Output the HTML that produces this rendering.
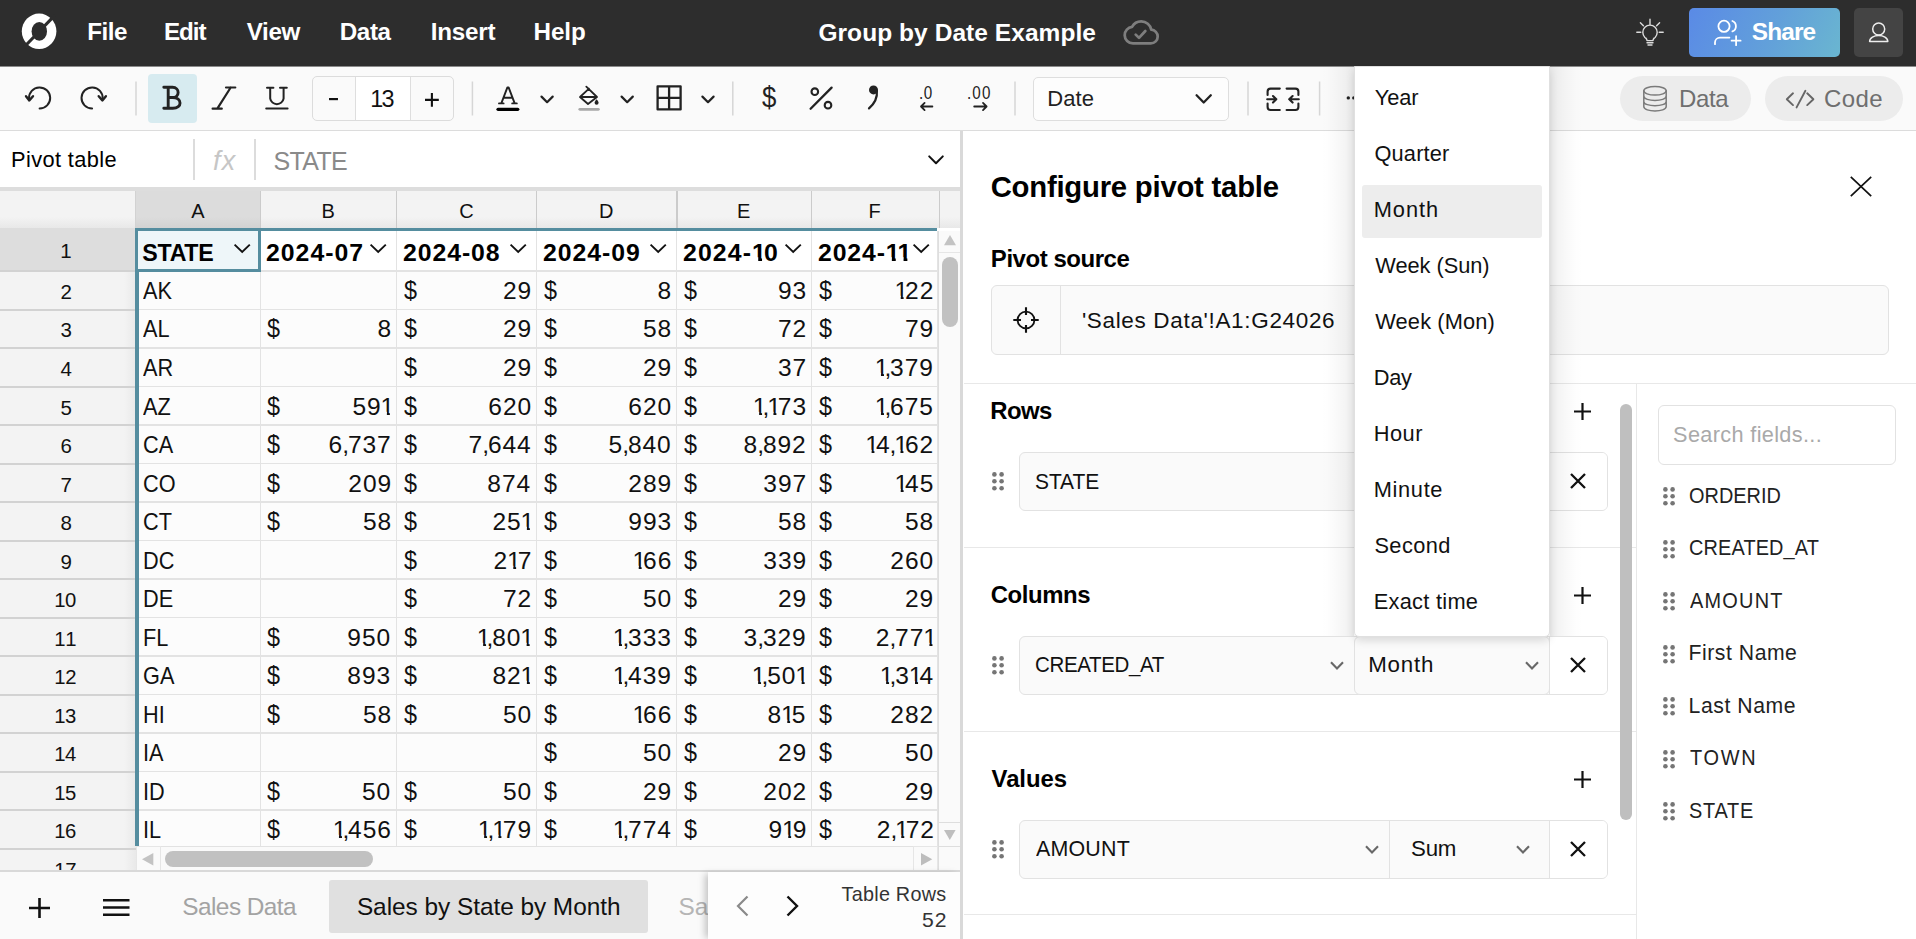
<!DOCTYPE html>
<html><head><meta charset="utf-8"><title>Group by Date Example</title>
<style>
html,body{margin:0;padding:0;}
body{width:1916px;height:939px;overflow:hidden;position:relative;background:#fff;font-family:"Liberation Sans",sans-serif;color:#000;}
.b{position:absolute;box-sizing:border-box;}
.t{position:absolute;white-space:pre;line-height:1;}
.o{display:inline-block;clip-path:polygon(0 0,64% 0,64% 100%,43% 100%,43% 67%,0 67%);margin:0 -.16em 0 -.045em;}
.c{margin:0 -.085em 0 -.04em;}
.ob{display:inline-block;clip-path:polygon(0 0,67.5% 0,67.5% 100%,41% 100%,41% 66%,0 66%);margin:0 -.12em 0 0;}
svg{overflow:visible;}
</style></head><body>
<div class="b" style="left:0px;top:0px;width:1916px;height:66px;background:#2d2d2d;"></div>
<div class="b" style="left:0px;top:66px;width:1916px;height:1px;background:#8a8a8a;"></div>
<svg class="b" style="left:21px;top:13px;" width="36" height="37" viewBox="0 0 36 37"><ellipse cx="18.1" cy="18.3" rx="17.3" ry="17.7" fill="#fff"/><ellipse cx="18.3" cy="18.4" rx="7.7" ry="9.4" fill="#2d2d2d"/><path d="M34 2.2 L2.2 35" stroke="#2d2d2d" stroke-width="3.1" fill="none"/></svg>
<div class="t" style="left:87.13px;top:20px;font-size:24.2px;letter-spacing:-0.413px;font-weight:bold;color:#fff;">File</div>
<div class="t" style="left:163.93px;top:20px;font-size:24.2px;letter-spacing:-1.040px;font-weight:bold;color:#fff;">Edit</div>
<div class="t" style="left:246.78px;top:20px;font-size:24.2px;letter-spacing:-0.381px;font-weight:bold;color:#fff;">View</div>
<div class="t" style="left:339.73px;top:20px;font-size:24.2px;letter-spacing:-0.365px;font-weight:bold;color:#fff;">Data</div>
<div class="t" style="left:430.63px;top:20px;font-size:24.2px;letter-spacing:-0.203px;font-weight:bold;color:#fff;">Insert</div>
<div class="t" style="left:533.53px;top:20px;font-size:24.2px;letter-spacing:-0.060px;font-weight:bold;color:#fff;">Help</div>
<div class="t" style="left:818.42px;top:21px;font-size:24.5px;letter-spacing:0.059px;font-weight:bold;color:#fff;">Group by Date Example</div>
<div class="b" style="left:1689px;top:8px;width:151px;height:49px;border-radius:5px;background:linear-gradient(115deg,#5a8ae6,#62a0da 55%,#6ab6d0);"></div>
<div class="t" style="left:1751.87px;top:20px;font-size:24.4px;letter-spacing:-0.901px;font-weight:bold;color:#fff;">Share</div>
<div class="b" style="left:1854px;top:8px;width:49px;height:49px;background:#444;border-radius:5px;"></div>
<div class="b" style="left:0px;top:67px;width:1916px;height:64px;background:#fafafa;border-bottom:1px solid #dcdcdc;"></div>
<div class="b" style="left:148px;top:74px;width:49px;height:49px;background:#d7ebf0;border-radius:4px;"></div>
<svg class="b" style="left:0;top:0;" width="1916" height="939" viewBox="0 0 1916 939"><rect x="135.25" y="81.5" width="1.5" height="34" fill="#d6d6d6"/><rect x="471.65" y="81.5" width="1.5" height="34" fill="#d6d6d6"/><rect x="732.05" y="81.5" width="1.5" height="34" fill="#d6d6d6"/><rect x="1014.25" y="81.5" width="1.5" height="34" fill="#d6d6d6"/><rect x="1247.25" y="81.5" width="1.5" height="34" fill="#d6d6d6"/><rect x="1318.85" y="81.5" width="1.5" height="34" fill="#d6d6d6"/></svg>
<div class="b" style="left:312px;top:76px;width:142px;height:45px;background:#fafafa;border:1px solid #dcdcdc;border-radius:5px;"></div>
<div class="b" style="left:356px;top:77px;width:54px;height:43px;background:#fff;"></div>
<div class="b" style="left:355px;top:77px;width:1px;height:43px;background:#dedede;"></div>
<div class="b" style="left:410px;top:77px;width:1px;height:43px;background:#dedede;"></div>
<div class="t" style="left:370.14px;top:88px;font-size:23.4px;letter-spacing:-1.610px;color:#111;">13</div>
<svg class="b" style="left:329.3px;top:97.9px;" width="9" height="2.2" viewBox="0 0 9 2.2"><rect width="9" height="2.2" fill="#111"/></svg>
<svg class="b" style="left:425.1px;top:93.1px;" width="13.8" height="13.8" viewBox="0 0 13.8 13.8"><path d="M6.9 0 V13.8 M0 6.9 H13.8" stroke="#111" stroke-width="2.1" fill="none"/></svg>
<div class="b" style="left:1033px;top:77px;width:196px;height:44px;background:#fdfdfd;border:1px solid #dedede;border-radius:5px;"></div>
<div class="t" style="left:1047.24px;top:88px;font-size:22px;letter-spacing:0.101px;color:#222;">Date</div>
<div class="b" style="left:1620px;top:76px;width:131px;height:45px;background:#ececec;border-radius:23px;"></div>
<div class="b" style="left:1765px;top:76px;width:138px;height:45px;background:#ececec;border-radius:23px;"></div>
<div class="t" style="left:1678.88px;top:87px;font-size:24px;letter-spacing:-0.316px;color:#6f6f6f;">Data</div>
<div class="t" style="left:1823.90px;top:87px;font-size:24px;letter-spacing:0.444px;color:#6f6f6f;">Code</div>
<div class="b" style="left:0px;top:131px;width:961px;height:56px;background:#fff;"></div>
<div class="t" style="left:11.06px;top:149px;font-size:21.8px;letter-spacing:0.375px;">Pivot table</div>
<div class="b" style="left:193.2px;top:138.5px;width:1.5px;height:41.5px;background:#dcdcdc;"></div>
<div class="b" style="left:254.3px;top:138.5px;width:1.5px;height:41.5px;background:#dcdcdc;"></div>
<div class="t" style="left:213.09px;top:148px;font-size:27px;letter-spacing:1.074px;font-style:italic;color:#c6c6c6;">fx</div>
<div class="t" style="left:273.57px;top:149px;font-size:25px;letter-spacing:-0.671px;color:#8a8a8a;">STATE</div>
<div class="b" style="left:0px;top:187px;width:961px;height:4px;background:#dddddd;"></div>
<div class="b" style="left:136px;top:191px;width:802px;height:656px;background:#fcfcfc;"></div>
<div class="b" style="left:0px;top:191px;width:961px;height:37px;background:#f3f3f3;background:linear-gradient(#f3f3f3 0,#f3f3f3 70%,#e8e8e8 100%);"></div>
<div class="b" style="left:136px;top:191px;width:124px;height:37px;background:#dcdcdc;background:linear-gradient(#dcdcdc 0,#dcdcdc 70%,#d2d2d2 100%);"></div>
<div class="b" style="left:259.6px;top:191px;width:1.5px;height:37px;background:#cbcbcb;"></div>
<div class="b" style="left:395.7px;top:191px;width:1.5px;height:37px;background:#cbcbcb;"></div>
<div class="b" style="left:535.9px;top:191px;width:1.5px;height:37px;background:#cbcbcb;"></div>
<div class="b" style="left:676.0999999999999px;top:191px;width:1.5px;height:37px;background:#cbcbcb;"></div>
<div class="b" style="left:810.9px;top:191px;width:1.5px;height:37px;background:#cbcbcb;"></div>
<div class="b" style="left:938.6999999999999px;top:191px;width:1.5px;height:37px;background:#cbcbcb;"></div>
<div class="b" style="left:135px;top:191px;width:1.2px;height:37px;background:#d2d2d2;"></div>
<div class="t" style="left:191.35px;top:201px;font-size:20px;color:#111;">A</div>
<div class="t" style="left:321.55px;top:201px;font-size:20px;color:#111;">B</div>
<div class="t" style="left:459.15px;top:201px;font-size:20px;color:#111;">C</div>
<div class="t" style="left:598.95px;top:201px;font-size:20px;color:#111;">D</div>
<div class="t" style="left:736.95px;top:201px;font-size:20px;color:#111;">E</div>
<div class="t" style="left:868.50px;top:201px;font-size:20px;color:#111;">F</div>
<div class="b" style="left:0px;top:228px;width:136px;height:643px;background:#f3f3f3;background:linear-gradient(90deg,#f3f3f3 0,#f3f3f3 124px,#e9e9e9 136px);"></div>
<div class="b" style="left:0px;top:228px;width:136px;height:43px;background:#dddddd;"></div>
<div class="b" style="left:136px;top:228px;width:802px;height:43px;background:#fff;"></div>
<div class="b" style="left:136px;top:270.4px;width:802px;height:1.2px;background:#e3e3e3;"></div>
<div class="b" style="left:0px;top:270.1px;width:136px;height:2px;background:#d2d2d2;"></div>
<div class="b" style="left:136px;top:308.9px;width:802px;height:1.2px;background:#e3e3e3;"></div>
<div class="b" style="left:0px;top:308.6px;width:136px;height:2px;background:#d2d2d2;"></div>
<div class="b" style="left:136px;top:347.4px;width:802px;height:1.2px;background:#e3e3e3;"></div>
<div class="b" style="left:0px;top:347.1px;width:136px;height:2px;background:#d2d2d2;"></div>
<div class="b" style="left:136px;top:385.9px;width:802px;height:1.2px;background:#e3e3e3;"></div>
<div class="b" style="left:0px;top:385.6px;width:136px;height:2px;background:#d2d2d2;"></div>
<div class="b" style="left:136px;top:424.4px;width:802px;height:1.2px;background:#e3e3e3;"></div>
<div class="b" style="left:0px;top:424.1px;width:136px;height:2px;background:#d2d2d2;"></div>
<div class="b" style="left:136px;top:462.9px;width:802px;height:1.2px;background:#e3e3e3;"></div>
<div class="b" style="left:0px;top:462.6px;width:136px;height:2px;background:#d2d2d2;"></div>
<div class="b" style="left:136px;top:501.4px;width:802px;height:1.2px;background:#e3e3e3;"></div>
<div class="b" style="left:0px;top:501.1px;width:136px;height:2px;background:#d2d2d2;"></div>
<div class="b" style="left:136px;top:539.9px;width:802px;height:1.2px;background:#e3e3e3;"></div>
<div class="b" style="left:0px;top:539.6px;width:136px;height:2px;background:#d2d2d2;"></div>
<div class="b" style="left:136px;top:578.4px;width:802px;height:1.2px;background:#e3e3e3;"></div>
<div class="b" style="left:0px;top:578.1px;width:136px;height:2px;background:#d2d2d2;"></div>
<div class="b" style="left:136px;top:616.9px;width:802px;height:1.2px;background:#e3e3e3;"></div>
<div class="b" style="left:0px;top:616.6px;width:136px;height:2px;background:#d2d2d2;"></div>
<div class="b" style="left:136px;top:655.4px;width:802px;height:1.2px;background:#e3e3e3;"></div>
<div class="b" style="left:0px;top:655.1px;width:136px;height:2px;background:#d2d2d2;"></div>
<div class="b" style="left:136px;top:693.9px;width:802px;height:1.2px;background:#e3e3e3;"></div>
<div class="b" style="left:0px;top:693.6px;width:136px;height:2px;background:#d2d2d2;"></div>
<div class="b" style="left:136px;top:732.4px;width:802px;height:1.2px;background:#e3e3e3;"></div>
<div class="b" style="left:0px;top:732.1px;width:136px;height:2px;background:#d2d2d2;"></div>
<div class="b" style="left:136px;top:770.9px;width:802px;height:1.2px;background:#e3e3e3;"></div>
<div class="b" style="left:0px;top:770.6px;width:136px;height:2px;background:#d2d2d2;"></div>
<div class="b" style="left:136px;top:809.4px;width:802px;height:1.2px;background:#e3e3e3;"></div>
<div class="b" style="left:0px;top:809.1px;width:136px;height:2px;background:#d2d2d2;"></div>
<div class="b" style="left:136px;top:847.9px;width:802px;height:1.2px;background:#e3e3e3;"></div>
<div class="b" style="left:0px;top:847.6px;width:136px;height:2px;background:#d2d2d2;"></div>
<div class="b" style="left:259.7px;top:231px;width:1.2px;height:616px;background:#e3e3e3;"></div>
<div class="b" style="left:395.79999999999995px;top:231px;width:1.2px;height:616px;background:#e3e3e3;"></div>
<div class="b" style="left:536.0px;top:231px;width:1.2px;height:616px;background:#e3e3e3;"></div>
<div class="b" style="left:676.1999999999999px;top:231px;width:1.2px;height:616px;background:#e3e3e3;"></div>
<div class="b" style="left:811.0px;top:231px;width:1.2px;height:616px;background:#e3e3e3;"></div>
<div class="b" style="left:936.9px;top:231px;width:1.2px;height:616px;background:#e3e3e3;"></div>
<div class="t" style="left:60.20px;top:241px;font-size:20.5px;color:#111;">1</div>
<div class="t" style="left:60.51px;top:282px;font-size:20.5px;color:#111;">2</div>
<div class="t" style="left:60.51px;top:320px;font-size:20.5px;color:#111;">3</div>
<div class="t" style="left:60.61px;top:359px;font-size:20.5px;color:#111;">4</div>
<div class="t" style="left:60.51px;top:398px;font-size:20.5px;color:#111;">5</div>
<div class="t" style="left:60.41px;top:436px;font-size:20.5px;color:#111;">6</div>
<div class="t" style="left:60.51px;top:475px;font-size:20.5px;color:#111;">7</div>
<div class="t" style="left:60.46px;top:513px;font-size:20.5px;color:#111;">8</div>
<div class="t" style="left:60.51px;top:552px;font-size:20.5px;color:#111;">9</div>
<div class="t" style="left:54.28px;top:590px;font-size:20.3px;letter-spacing:-0.524px;color:#111;">10</div>
<div class="t" style="left:54.28px;top:629px;font-size:20.3px;letter-spacing:1.186px;color:#111;">11</div>
<div class="t" style="left:54.28px;top:667px;font-size:20.3px;letter-spacing:-0.219px;color:#111;">12</div>
<div class="t" style="left:54.28px;top:706px;font-size:20.3px;letter-spacing:-0.422px;color:#111;">13</div>
<div class="t" style="left:54.28px;top:744px;font-size:20.3px;letter-spacing:-0.625px;color:#111;">14</div>
<div class="t" style="left:54.28px;top:783px;font-size:20.3px;letter-spacing:-0.422px;color:#111;">15</div>
<div class="t" style="left:54.28px;top:821px;font-size:20.3px;letter-spacing:-0.422px;color:#111;">16</div>
<div class="t" style="left:54.28px;top:860px;font-size:20.3px;letter-spacing:-0.219px;color:#111;">17</div>
<div class="b" style="left:135.4px;top:228px;width:3.3px;height:618px;background:#558d9f;"></div>
<div class="b" style="left:135.4px;top:227.6px;width:802px;height:3.3px;background:#558d9f;"></div>
<div class="b" style="left:135.4px;top:227.6px;width:125.7px;height:44.6px;background:#eef6f9;border:3.3px solid #558d9f;"></div>
<div class="t" style="left:142.30px;top:242px;font-size:23.2px;letter-spacing:-0.287px;font-weight:bold;">STATE</div>
<div class="t" style="left:266.43px;top:242px;font-size:23.2px;letter-spacing:0.932px;transform:scaleX(1.07);transform-origin:0 0;font-weight:bold;">2024-07</div>
<div class="t" style="left:402.63px;top:242px;font-size:23.2px;letter-spacing:0.862px;transform:scaleX(1.07);transform-origin:0 0;font-weight:bold;">2024-08</div>
<div class="t" style="left:542.63px;top:242px;font-size:23.2px;letter-spacing:0.882px;transform:scaleX(1.07);transform-origin:0 0;font-weight:bold;">2024-09</div>
<div class="t" style="left:682.63px;top:242px;font-size:23.2px;letter-spacing:1.054px;transform:scaleX(1.07);transform-origin:0 0;font-weight:bold;">2024-<span class="ob">1</span>0</div>
<div class="t" style="left:817.63px;top:242px;font-size:23.2px;letter-spacing:0.816px;transform:scaleX(1.07);transform-origin:0 0;font-weight:bold;">2024-<span class="ob">1</span><span class="ob">1</span></div>
<svg class="b" style="left:233.8px;top:244.3px;" width="16.4" height="9" viewBox="0 0 16.4 9"><path d="M0.6 0.6 L8.2 8 L15.8 0.6" fill="none" stroke="#111" stroke-width="1.9"/></svg>
<svg class="b" style="left:370.40000000000003px;top:244.3px;" width="16.4" height="9" viewBox="0 0 16.4 9"><path d="M0.6 0.6 L8.2 8 L15.8 0.6" fill="none" stroke="#111" stroke-width="1.9"/></svg>
<svg class="b" style="left:509.8px;top:244.3px;" width="16.4" height="9" viewBox="0 0 16.4 9"><path d="M0.6 0.6 L8.2 8 L15.8 0.6" fill="none" stroke="#111" stroke-width="1.9"/></svg>
<svg class="b" style="left:649.8px;top:244.3px;" width="16.4" height="9" viewBox="0 0 16.4 9"><path d="M0.6 0.6 L8.2 8 L15.8 0.6" fill="none" stroke="#111" stroke-width="1.9"/></svg>
<svg class="b" style="left:784.8px;top:244.3px;" width="16.4" height="9" viewBox="0 0 16.4 9"><path d="M0.6 0.6 L8.2 8 L15.8 0.6" fill="none" stroke="#111" stroke-width="1.9"/></svg>
<svg class="b" style="left:912.8px;top:244.3px;" width="16.4" height="9" viewBox="0 0 16.4 9"><path d="M0.6 0.6 L8.2 8 L15.8 0.6" fill="none" stroke="#111" stroke-width="1.9"/></svg>
<div class="t" style="left:142.70px;top:280.00px;font-size:23.6px;transform:scaleX(0.92);transform-origin:0 0;color:#111;">AK</div>
<div class="t" style="left:403.57px;top:277.00px;font-size:26px;transform:scaleX(0.9);transform-origin:0 0;color:#111;">$</div>
<div class="t" style="right:1384.13px;top:280px;font-size:23.6px;letter-spacing:0.9px;transform:scaleX(1.04);transform-origin:100% 0;color:#111;">29</div>
<div class="t" style="left:543.77px;top:277.00px;font-size:26px;transform:scaleX(0.9);transform-origin:0 0;color:#111;">$</div>
<div class="t" style="right:1244.05px;top:280px;font-size:23.6px;letter-spacing:0.9px;transform:scaleX(1.04);transform-origin:100% 0;color:#111;">8</div>
<div class="t" style="left:683.97px;top:277.00px;font-size:26px;transform:scaleX(0.9);transform-origin:0 0;color:#111;">$</div>
<div class="t" style="right:1109.25px;top:280px;font-size:23.6px;letter-spacing:0.9px;transform:scaleX(1.04);transform-origin:100% 0;color:#111;">93</div>
<div class="t" style="left:818.77px;top:277.00px;font-size:26px;transform:scaleX(0.9);transform-origin:0 0;color:#111;">$</div>
<div class="t" style="right:981.61px;top:280px;font-size:23.6px;letter-spacing:0.9px;transform:scaleX(1.04);transform-origin:100% 0;color:#111;"><span class="o">1</span>22</div>
<div class="t" style="left:142.70px;top:318.00px;font-size:23.6px;transform:scaleX(0.92);transform-origin:0 0;color:#111;">AL</div>
<div class="t" style="left:267.47px;top:315.00px;font-size:26px;transform:scaleX(0.9);transform-origin:0 0;color:#111;">$</div>
<div class="t" style="right:1524.45px;top:318px;font-size:23.6px;letter-spacing:0.9px;transform:scaleX(1.04);transform-origin:100% 0;color:#111;">8</div>
<div class="t" style="left:403.57px;top:315.00px;font-size:26px;transform:scaleX(0.9);transform-origin:0 0;color:#111;">$</div>
<div class="t" style="right:1384.13px;top:318px;font-size:23.6px;letter-spacing:0.9px;transform:scaleX(1.04);transform-origin:100% 0;color:#111;">29</div>
<div class="t" style="left:543.77px;top:315.00px;font-size:26px;transform:scaleX(0.9);transform-origin:0 0;color:#111;">$</div>
<div class="t" style="right:1244.05px;top:318px;font-size:23.6px;letter-spacing:0.9px;transform:scaleX(1.04);transform-origin:100% 0;color:#111;">58</div>
<div class="t" style="left:683.97px;top:315.00px;font-size:26px;transform:scaleX(0.9);transform-origin:0 0;color:#111;">$</div>
<div class="t" style="right:1109.01px;top:318px;font-size:23.6px;letter-spacing:0.9px;transform:scaleX(1.04);transform-origin:100% 0;color:#111;">72</div>
<div class="t" style="left:818.77px;top:315.00px;font-size:26px;transform:scaleX(0.9);transform-origin:0 0;color:#111;">$</div>
<div class="t" style="right:981.73px;top:318px;font-size:23.6px;letter-spacing:0.9px;transform:scaleX(1.04);transform-origin:100% 0;color:#111;">79</div>
<div class="t" style="left:142.70px;top:357.00px;font-size:23.6px;transform:scaleX(0.92);transform-origin:0 0;color:#111;">AR</div>
<div class="t" style="left:403.57px;top:354.00px;font-size:26px;transform:scaleX(0.9);transform-origin:0 0;color:#111;">$</div>
<div class="t" style="right:1384.13px;top:357px;font-size:23.6px;letter-spacing:0.9px;transform:scaleX(1.04);transform-origin:100% 0;color:#111;">29</div>
<div class="t" style="left:543.77px;top:354.00px;font-size:26px;transform:scaleX(0.9);transform-origin:0 0;color:#111;">$</div>
<div class="t" style="right:1243.93px;top:357px;font-size:23.6px;letter-spacing:0.9px;transform:scaleX(1.04);transform-origin:100% 0;color:#111;">29</div>
<div class="t" style="left:683.97px;top:354.00px;font-size:26px;transform:scaleX(0.9);transform-origin:0 0;color:#111;">$</div>
<div class="t" style="right:1109.01px;top:357px;font-size:23.6px;letter-spacing:0.9px;transform:scaleX(1.04);transform-origin:100% 0;color:#111;">37</div>
<div class="t" style="left:818.77px;top:354.00px;font-size:26px;transform:scaleX(0.9);transform-origin:0 0;color:#111;">$</div>
<div class="t" style="right:981.73px;top:357px;font-size:23.6px;letter-spacing:0.9px;transform:scaleX(1.04);transform-origin:100% 0;color:#111;"><span class="o">1</span><span class="c">,</span>379</div>
<div class="t" style="left:142.70px;top:396.00px;font-size:23.6px;transform:scaleX(0.92);transform-origin:0 0;color:#111;">AZ</div>
<div class="t" style="left:267.47px;top:393.00px;font-size:26px;transform:scaleX(0.9);transform-origin:0 0;color:#111;">$</div>
<div class="t" style="right:1524.97px;top:396px;font-size:23.6px;letter-spacing:0.9px;transform:scaleX(1.04);transform-origin:100% 0;color:#111;">59<span class="o">1</span></div>
<div class="t" style="left:403.57px;top:393.00px;font-size:26px;transform:scaleX(0.9);transform-origin:0 0;color:#111;">$</div>
<div class="t" style="right:1384.38px;top:396px;font-size:23.6px;letter-spacing:0.9px;transform:scaleX(1.04);transform-origin:100% 0;color:#111;">620</div>
<div class="t" style="left:543.77px;top:393.00px;font-size:26px;transform:scaleX(0.9);transform-origin:0 0;color:#111;">$</div>
<div class="t" style="right:1244.18px;top:396px;font-size:23.6px;letter-spacing:0.9px;transform:scaleX(1.04);transform-origin:100% 0;color:#111;">620</div>
<div class="t" style="left:683.97px;top:393.00px;font-size:26px;transform:scaleX(0.9);transform-origin:0 0;color:#111;">$</div>
<div class="t" style="right:1109.25px;top:396px;font-size:23.6px;letter-spacing:0.9px;transform:scaleX(1.04);transform-origin:100% 0;color:#111;"><span class="o">1</span><span class="c">,</span><span class="o">1</span>73</div>
<div class="t" style="left:818.77px;top:393.00px;font-size:26px;transform:scaleX(0.9);transform-origin:0 0;color:#111;">$</div>
<div class="t" style="right:981.85px;top:396px;font-size:23.6px;letter-spacing:0.9px;transform:scaleX(1.04);transform-origin:100% 0;color:#111;"><span class="o">1</span><span class="c">,</span>675</div>
<div class="t" style="left:142.70px;top:434.00px;font-size:23.6px;transform:scaleX(0.92);transform-origin:0 0;color:#111;">CA</div>
<div class="t" style="left:267.47px;top:431.00px;font-size:26px;transform:scaleX(0.9);transform-origin:0 0;color:#111;">$</div>
<div class="t" style="right:1524.21px;top:434px;font-size:23.6px;letter-spacing:0.9px;transform:scaleX(1.04);transform-origin:100% 0;color:#111;">6<span class="c">,</span>737</div>
<div class="t" style="left:403.57px;top:431.00px;font-size:26px;transform:scaleX(0.9);transform-origin:0 0;color:#111;">$</div>
<div class="t" style="right:1384.50px;top:434px;font-size:23.6px;letter-spacing:0.9px;transform:scaleX(1.04);transform-origin:100% 0;color:#111;">7<span class="c">,</span>644</div>
<div class="t" style="left:543.77px;top:431.00px;font-size:26px;transform:scaleX(0.9);transform-origin:0 0;color:#111;">$</div>
<div class="t" style="right:1244.18px;top:434px;font-size:23.6px;letter-spacing:0.9px;transform:scaleX(1.04);transform-origin:100% 0;color:#111;">5<span class="c">,</span>840</div>
<div class="t" style="left:683.97px;top:431.00px;font-size:26px;transform:scaleX(0.9);transform-origin:0 0;color:#111;">$</div>
<div class="t" style="right:1109.01px;top:434px;font-size:23.6px;letter-spacing:0.9px;transform:scaleX(1.04);transform-origin:100% 0;color:#111;">8<span class="c">,</span>892</div>
<div class="t" style="left:818.77px;top:431.00px;font-size:26px;transform:scaleX(0.9);transform-origin:0 0;color:#111;">$</div>
<div class="t" style="right:981.61px;top:434px;font-size:23.6px;letter-spacing:0.9px;transform:scaleX(1.04);transform-origin:100% 0;color:#111;"><span class="o">1</span>4<span class="c">,</span><span class="o">1</span>62</div>
<div class="t" style="left:142.70px;top:473.00px;font-size:23.6px;transform:scaleX(0.92);transform-origin:0 0;color:#111;">CO</div>
<div class="t" style="left:267.47px;top:470.00px;font-size:26px;transform:scaleX(0.9);transform-origin:0 0;color:#111;">$</div>
<div class="t" style="right:1524.33px;top:473px;font-size:23.6px;letter-spacing:0.9px;transform:scaleX(1.04);transform-origin:100% 0;color:#111;">209</div>
<div class="t" style="left:403.57px;top:470.00px;font-size:26px;transform:scaleX(0.9);transform-origin:0 0;color:#111;">$</div>
<div class="t" style="right:1384.50px;top:473px;font-size:23.6px;letter-spacing:0.9px;transform:scaleX(1.04);transform-origin:100% 0;color:#111;">874</div>
<div class="t" style="left:543.77px;top:470.00px;font-size:26px;transform:scaleX(0.9);transform-origin:0 0;color:#111;">$</div>
<div class="t" style="right:1243.93px;top:473px;font-size:23.6px;letter-spacing:0.9px;transform:scaleX(1.04);transform-origin:100% 0;color:#111;">289</div>
<div class="t" style="left:683.97px;top:470.00px;font-size:26px;transform:scaleX(0.9);transform-origin:0 0;color:#111;">$</div>
<div class="t" style="right:1109.01px;top:473px;font-size:23.6px;letter-spacing:0.9px;transform:scaleX(1.04);transform-origin:100% 0;color:#111;">397</div>
<div class="t" style="left:818.77px;top:470.00px;font-size:26px;transform:scaleX(0.9);transform-origin:0 0;color:#111;">$</div>
<div class="t" style="right:981.85px;top:473px;font-size:23.6px;letter-spacing:0.9px;transform:scaleX(1.04);transform-origin:100% 0;color:#111;"><span class="o">1</span>45</div>
<div class="t" style="left:142.70px;top:511.00px;font-size:23.6px;transform:scaleX(0.92);transform-origin:0 0;color:#111;">CT</div>
<div class="t" style="left:267.47px;top:508.00px;font-size:26px;transform:scaleX(0.9);transform-origin:0 0;color:#111;">$</div>
<div class="t" style="right:1524.45px;top:511px;font-size:23.6px;letter-spacing:0.9px;transform:scaleX(1.04);transform-origin:100% 0;color:#111;">58</div>
<div class="t" style="left:403.57px;top:508.00px;font-size:26px;transform:scaleX(0.9);transform-origin:0 0;color:#111;">$</div>
<div class="t" style="right:1384.77px;top:511px;font-size:23.6px;letter-spacing:0.9px;transform:scaleX(1.04);transform-origin:100% 0;color:#111;">25<span class="o">1</span></div>
<div class="t" style="left:543.77px;top:508.00px;font-size:26px;transform:scaleX(0.9);transform-origin:0 0;color:#111;">$</div>
<div class="t" style="right:1244.05px;top:511px;font-size:23.6px;letter-spacing:0.9px;transform:scaleX(1.04);transform-origin:100% 0;color:#111;">993</div>
<div class="t" style="left:683.97px;top:508.00px;font-size:26px;transform:scaleX(0.9);transform-origin:0 0;color:#111;">$</div>
<div class="t" style="right:1109.25px;top:511px;font-size:23.6px;letter-spacing:0.9px;transform:scaleX(1.04);transform-origin:100% 0;color:#111;">58</div>
<div class="t" style="left:818.77px;top:508.00px;font-size:26px;transform:scaleX(0.9);transform-origin:0 0;color:#111;">$</div>
<div class="t" style="right:981.85px;top:511px;font-size:23.6px;letter-spacing:0.9px;transform:scaleX(1.04);transform-origin:100% 0;color:#111;">58</div>
<div class="t" style="left:142.70px;top:550.00px;font-size:23.6px;transform:scaleX(0.92);transform-origin:0 0;color:#111;">DC</div>
<div class="t" style="left:403.57px;top:547.00px;font-size:26px;transform:scaleX(0.9);transform-origin:0 0;color:#111;">$</div>
<div class="t" style="right:1384.01px;top:550px;font-size:23.6px;letter-spacing:0.9px;transform:scaleX(1.04);transform-origin:100% 0;color:#111;">2<span class="o">1</span>7</div>
<div class="t" style="left:543.77px;top:547.00px;font-size:26px;transform:scaleX(0.9);transform-origin:0 0;color:#111;">$</div>
<div class="t" style="right:1244.05px;top:550px;font-size:23.6px;letter-spacing:0.9px;transform:scaleX(1.04);transform-origin:100% 0;color:#111;"><span class="o">1</span>66</div>
<div class="t" style="left:683.97px;top:547.00px;font-size:26px;transform:scaleX(0.9);transform-origin:0 0;color:#111;">$</div>
<div class="t" style="right:1109.13px;top:550px;font-size:23.6px;letter-spacing:0.9px;transform:scaleX(1.04);transform-origin:100% 0;color:#111;">339</div>
<div class="t" style="left:818.77px;top:547.00px;font-size:26px;transform:scaleX(0.9);transform-origin:0 0;color:#111;">$</div>
<div class="t" style="right:981.98px;top:550px;font-size:23.6px;letter-spacing:0.9px;transform:scaleX(1.04);transform-origin:100% 0;color:#111;">260</div>
<div class="t" style="left:142.70px;top:588.00px;font-size:23.6px;transform:scaleX(0.92);transform-origin:0 0;color:#111;">DE</div>
<div class="t" style="left:403.57px;top:585.00px;font-size:26px;transform:scaleX(0.9);transform-origin:0 0;color:#111;">$</div>
<div class="t" style="right:1384.01px;top:588px;font-size:23.6px;letter-spacing:0.9px;transform:scaleX(1.04);transform-origin:100% 0;color:#111;">72</div>
<div class="t" style="left:543.77px;top:585.00px;font-size:26px;transform:scaleX(0.9);transform-origin:0 0;color:#111;">$</div>
<div class="t" style="right:1244.18px;top:588px;font-size:23.6px;letter-spacing:0.9px;transform:scaleX(1.04);transform-origin:100% 0;color:#111;">50</div>
<div class="t" style="left:683.97px;top:585.00px;font-size:26px;transform:scaleX(0.9);transform-origin:0 0;color:#111;">$</div>
<div class="t" style="right:1109.13px;top:588px;font-size:23.6px;letter-spacing:0.9px;transform:scaleX(1.04);transform-origin:100% 0;color:#111;">29</div>
<div class="t" style="left:818.77px;top:585.00px;font-size:26px;transform:scaleX(0.9);transform-origin:0 0;color:#111;">$</div>
<div class="t" style="right:981.73px;top:588px;font-size:23.6px;letter-spacing:0.9px;transform:scaleX(1.04);transform-origin:100% 0;color:#111;">29</div>
<div class="t" style="left:142.70px;top:627.00px;font-size:23.6px;transform:scaleX(0.92);transform-origin:0 0;color:#111;">FL</div>
<div class="t" style="left:267.47px;top:624.00px;font-size:26px;transform:scaleX(0.9);transform-origin:0 0;color:#111;">$</div>
<div class="t" style="right:1524.58px;top:627px;font-size:23.6px;letter-spacing:0.9px;transform:scaleX(1.04);transform-origin:100% 0;color:#111;">950</div>
<div class="t" style="left:403.57px;top:624.00px;font-size:26px;transform:scaleX(0.9);transform-origin:0 0;color:#111;">$</div>
<div class="t" style="right:1384.77px;top:627px;font-size:23.6px;letter-spacing:0.9px;transform:scaleX(1.04);transform-origin:100% 0;color:#111;"><span class="o">1</span><span class="c">,</span>80<span class="o">1</span></div>
<div class="t" style="left:543.77px;top:624.00px;font-size:26px;transform:scaleX(0.9);transform-origin:0 0;color:#111;">$</div>
<div class="t" style="right:1244.05px;top:627px;font-size:23.6px;letter-spacing:0.9px;transform:scaleX(1.04);transform-origin:100% 0;color:#111;"><span class="o">1</span><span class="c">,</span>333</div>
<div class="t" style="left:683.97px;top:624.00px;font-size:26px;transform:scaleX(0.9);transform-origin:0 0;color:#111;">$</div>
<div class="t" style="right:1109.13px;top:627px;font-size:23.6px;letter-spacing:0.9px;transform:scaleX(1.04);transform-origin:100% 0;color:#111;">3<span class="c">,</span>329</div>
<div class="t" style="left:818.77px;top:624.00px;font-size:26px;transform:scaleX(0.9);transform-origin:0 0;color:#111;">$</div>
<div class="t" style="right:982.37px;top:627px;font-size:23.6px;letter-spacing:0.9px;transform:scaleX(1.04);transform-origin:100% 0;color:#111;">2<span class="c">,</span>77<span class="o">1</span></div>
<div class="t" style="left:142.70px;top:665.00px;font-size:23.6px;transform:scaleX(0.92);transform-origin:0 0;color:#111;">GA</div>
<div class="t" style="left:267.47px;top:662.00px;font-size:26px;transform:scaleX(0.9);transform-origin:0 0;color:#111;">$</div>
<div class="t" style="right:1524.45px;top:665px;font-size:23.6px;letter-spacing:0.9px;transform:scaleX(1.04);transform-origin:100% 0;color:#111;">893</div>
<div class="t" style="left:403.57px;top:662.00px;font-size:26px;transform:scaleX(0.9);transform-origin:0 0;color:#111;">$</div>
<div class="t" style="right:1384.77px;top:665px;font-size:23.6px;letter-spacing:0.9px;transform:scaleX(1.04);transform-origin:100% 0;color:#111;">82<span class="o">1</span></div>
<div class="t" style="left:543.77px;top:662.00px;font-size:26px;transform:scaleX(0.9);transform-origin:0 0;color:#111;">$</div>
<div class="t" style="right:1243.93px;top:665px;font-size:23.6px;letter-spacing:0.9px;transform:scaleX(1.04);transform-origin:100% 0;color:#111;"><span class="o">1</span><span class="c">,</span>439</div>
<div class="t" style="left:683.97px;top:662.00px;font-size:26px;transform:scaleX(0.9);transform-origin:0 0;color:#111;">$</div>
<div class="t" style="right:1109.77px;top:665px;font-size:23.6px;letter-spacing:0.9px;transform:scaleX(1.04);transform-origin:100% 0;color:#111;"><span class="o">1</span><span class="c">,</span>50<span class="o">1</span></div>
<div class="t" style="left:818.77px;top:662.00px;font-size:26px;transform:scaleX(0.9);transform-origin:0 0;color:#111;">$</div>
<div class="t" style="right:982.10px;top:665px;font-size:23.6px;letter-spacing:0.9px;transform:scaleX(1.04);transform-origin:100% 0;color:#111;"><span class="o">1</span><span class="c">,</span>3<span class="o">1</span>4</div>
<div class="t" style="left:142.70px;top:704.00px;font-size:23.6px;transform:scaleX(0.92);transform-origin:0 0;color:#111;">HI</div>
<div class="t" style="left:267.47px;top:701.00px;font-size:26px;transform:scaleX(0.9);transform-origin:0 0;color:#111;">$</div>
<div class="t" style="right:1524.45px;top:704px;font-size:23.6px;letter-spacing:0.9px;transform:scaleX(1.04);transform-origin:100% 0;color:#111;">58</div>
<div class="t" style="left:403.57px;top:701.00px;font-size:26px;transform:scaleX(0.9);transform-origin:0 0;color:#111;">$</div>
<div class="t" style="right:1384.38px;top:704px;font-size:23.6px;letter-spacing:0.9px;transform:scaleX(1.04);transform-origin:100% 0;color:#111;">50</div>
<div class="t" style="left:543.77px;top:701.00px;font-size:26px;transform:scaleX(0.9);transform-origin:0 0;color:#111;">$</div>
<div class="t" style="right:1244.05px;top:704px;font-size:23.6px;letter-spacing:0.9px;transform:scaleX(1.04);transform-origin:100% 0;color:#111;"><span class="o">1</span>66</div>
<div class="t" style="left:683.97px;top:701.00px;font-size:26px;transform:scaleX(0.9);transform-origin:0 0;color:#111;">$</div>
<div class="t" style="right:1109.25px;top:704px;font-size:23.6px;letter-spacing:0.9px;transform:scaleX(1.04);transform-origin:100% 0;color:#111;">8<span class="o">1</span>5</div>
<div class="t" style="left:818.77px;top:701.00px;font-size:26px;transform:scaleX(0.9);transform-origin:0 0;color:#111;">$</div>
<div class="t" style="right:981.61px;top:704px;font-size:23.6px;letter-spacing:0.9px;transform:scaleX(1.04);transform-origin:100% 0;color:#111;">282</div>
<div class="t" style="left:142.70px;top:742.00px;font-size:23.6px;transform:scaleX(0.92);transform-origin:0 0;color:#111;">IA</div>
<div class="t" style="left:543.77px;top:739.00px;font-size:26px;transform:scaleX(0.9);transform-origin:0 0;color:#111;">$</div>
<div class="t" style="right:1244.18px;top:742px;font-size:23.6px;letter-spacing:0.9px;transform:scaleX(1.04);transform-origin:100% 0;color:#111;">50</div>
<div class="t" style="left:683.97px;top:739.00px;font-size:26px;transform:scaleX(0.9);transform-origin:0 0;color:#111;">$</div>
<div class="t" style="right:1109.13px;top:742px;font-size:23.6px;letter-spacing:0.9px;transform:scaleX(1.04);transform-origin:100% 0;color:#111;">29</div>
<div class="t" style="left:818.77px;top:739.00px;font-size:26px;transform:scaleX(0.9);transform-origin:0 0;color:#111;">$</div>
<div class="t" style="right:981.98px;top:742px;font-size:23.6px;letter-spacing:0.9px;transform:scaleX(1.04);transform-origin:100% 0;color:#111;">50</div>
<div class="t" style="left:142.70px;top:781.00px;font-size:23.6px;transform:scaleX(0.92);transform-origin:0 0;color:#111;">ID</div>
<div class="t" style="left:267.47px;top:778.00px;font-size:26px;transform:scaleX(0.9);transform-origin:0 0;color:#111;">$</div>
<div class="t" style="right:1524.58px;top:781px;font-size:23.6px;letter-spacing:0.9px;transform:scaleX(1.04);transform-origin:100% 0;color:#111;">50</div>
<div class="t" style="left:403.57px;top:778.00px;font-size:26px;transform:scaleX(0.9);transform-origin:0 0;color:#111;">$</div>
<div class="t" style="right:1384.38px;top:781px;font-size:23.6px;letter-spacing:0.9px;transform:scaleX(1.04);transform-origin:100% 0;color:#111;">50</div>
<div class="t" style="left:543.77px;top:778.00px;font-size:26px;transform:scaleX(0.9);transform-origin:0 0;color:#111;">$</div>
<div class="t" style="right:1243.93px;top:781px;font-size:23.6px;letter-spacing:0.9px;transform:scaleX(1.04);transform-origin:100% 0;color:#111;">29</div>
<div class="t" style="left:683.97px;top:778.00px;font-size:26px;transform:scaleX(0.9);transform-origin:0 0;color:#111;">$</div>
<div class="t" style="right:1109.01px;top:781px;font-size:23.6px;letter-spacing:0.9px;transform:scaleX(1.04);transform-origin:100% 0;color:#111;">202</div>
<div class="t" style="left:818.77px;top:778.00px;font-size:26px;transform:scaleX(0.9);transform-origin:0 0;color:#111;">$</div>
<div class="t" style="right:981.73px;top:781px;font-size:23.6px;letter-spacing:0.9px;transform:scaleX(1.04);transform-origin:100% 0;color:#111;">29</div>
<div class="t" style="left:142.70px;top:819.00px;font-size:23.6px;transform:scaleX(0.92);transform-origin:0 0;color:#111;">IL</div>
<div class="t" style="left:267.47px;top:816.00px;font-size:26px;transform:scaleX(0.9);transform-origin:0 0;color:#111;">$</div>
<div class="t" style="right:1524.45px;top:819px;font-size:23.6px;letter-spacing:0.9px;transform:scaleX(1.04);transform-origin:100% 0;color:#111;"><span class="o">1</span><span class="c">,</span>456</div>
<div class="t" style="left:403.57px;top:816.00px;font-size:26px;transform:scaleX(0.9);transform-origin:0 0;color:#111;">$</div>
<div class="t" style="right:1384.13px;top:819px;font-size:23.6px;letter-spacing:0.9px;transform:scaleX(1.04);transform-origin:100% 0;color:#111;"><span class="o">1</span><span class="c">,</span><span class="o">1</span>79</div>
<div class="t" style="left:543.77px;top:816.00px;font-size:26px;transform:scaleX(0.9);transform-origin:0 0;color:#111;">$</div>
<div class="t" style="right:1244.30px;top:819px;font-size:23.6px;letter-spacing:0.9px;transform:scaleX(1.04);transform-origin:100% 0;color:#111;"><span class="o">1</span><span class="c">,</span>774</div>
<div class="t" style="left:683.97px;top:816.00px;font-size:26px;transform:scaleX(0.9);transform-origin:0 0;color:#111;">$</div>
<div class="t" style="right:1109.13px;top:819px;font-size:23.6px;letter-spacing:0.9px;transform:scaleX(1.04);transform-origin:100% 0;color:#111;">9<span class="o">1</span>9</div>
<div class="t" style="left:818.77px;top:816.00px;font-size:26px;transform:scaleX(0.9);transform-origin:0 0;color:#111;">$</div>
<div class="t" style="right:981.61px;top:819px;font-size:23.6px;letter-spacing:0.9px;transform:scaleX(1.04);transform-origin:100% 0;color:#111;">2<span class="c">,</span><span class="o">1</span>72</div>
<div class="b" style="left:937.5px;top:231px;width:23px;height:616px;background:#fafafa;border-left:1.5px solid #dedede;"></div>
<div class="b" style="left:941.5px;top:257px;width:16px;height:70px;background:#c1c1c1;border-radius:8px;"></div>
<div class="b" style="left:938.5px;top:252px;width:22px;height:1px;background:#e6e6e6;"></div>
<svg class="b" style="left:943.6px;top:235.3px;" width="12" height="10.2" viewBox="0 0 12 10.2"><path d="M6 0 L12 10.2 L0 10.2 Z" fill="#c3c3c3"/></svg>
<div class="b" style="left:937.5px;top:822px;width:23px;height:24.5px;background:#fafafa;border-top:1.5px solid #dedede;border-left:1.5px solid #dedede;"></div>
<svg class="b" style="left:944px;top:829.6px;" width="11.6" height="10" viewBox="0 0 11.6 10"><path d="M5.8 10 L11.6 0 L0 0 Z" fill="#bebebe"/></svg>
<div class="b" style="left:136px;top:846px;width:802px;height:25px;background:#fafafa;border-top:1px solid #e2e2e2;"></div>
<div class="b" style="left:136px;top:846px;width:25px;height:25px;background:#fafafa;border:1px solid #e6e6e6;"></div>
<div class="b" style="left:913px;top:846px;width:25px;height:25px;background:#fafafa;border:1px solid #e6e6e6;"></div>
<div class="b" style="left:937.5px;top:846px;width:23.5px;height:25px;background:#fafafa;border-left:1.5px solid #dedede;border-top:1.5px solid #dedede;"></div>
<svg class="b" style="left:142.2px;top:852.6px;" width="11.3" height="12.6" viewBox="0 0 11.3 12.6"><path d="M0 6.3 L11.3 0 L11.3 12.6 Z" fill="#c3c3c3"/></svg>
<svg class="b" style="left:920.8px;top:852.6px;" width="11.3" height="12.6" viewBox="0 0 11.3 12.6"><path d="M11.3 6.3 L0 0 L0 12.6 Z" fill="#bdbdbd"/></svg>
<div class="b" style="left:165px;top:851px;width:208px;height:15.5px;background:#c1c1c1;border-radius:8px;"></div>
<div class="b" style="left:960px;top:131px;width:3px;height:808px;background:#d9d9d9;"></div>
<div class="b" style="left:0px;top:870.4px;width:961px;height:1.4px;background:#d9d9d9;"></div>
<div class="b" style="left:0px;top:871.6px;width:961px;height:68px;background:#fafafa;"></div>
<div class="b" style="left:329px;top:880px;width:319px;height:53px;background:#e0e0e0;border-radius:3px;"></div>
<div class="t" style="left:182.30px;top:895px;font-size:24.4px;letter-spacing:-0.559px;color:#a3a3a3;">Sales Data</div>
<div class="t" style="left:356.90px;top:895px;font-size:24.4px;letter-spacing:-0.035px;color:#111;">Sales by State by Month</div>
<div class="t" style="left:678.60px;top:895px;font-size:24.4px;color:#b5b5b5;">Sales</div>
<div class="b" style="left:707.7px;top:871.6px;width:253px;height:68px;background:#fdfdfd;box-shadow:-5px 0 7px -2px rgba(0,0,0,.22);"></div>
<div class="b" style="left:960px;top:871px;width:3px;height:68px;background:#d9d9d9;"></div>
<div class="t" style="left:841.60px;top:885px;font-size:19.8px;letter-spacing:0.249px;color:#333;">Table Rows</div>
<div class="t" style="left:921.85px;top:911px;font-size:19.8px;letter-spacing:0.809px;transform:scaleX(1.07);transform-origin:0 0;color:#333;">52</div>
<svg class="b" style="left:28.8px;top:897.5px;" width="21" height="20" viewBox="0 0 21 20"><path d="M10.5 0 V20 M0 10 H21" stroke="#111" stroke-width="2.6" fill="none"/></svg>
<svg class="b" style="left:103.4px;top:899px;" width="26.5" height="17" viewBox="0 0 26.5 17"><path d="M0 1.3 H26.5 M0 8.5 H26.5 M0 15.7 H26.5" stroke="#111" stroke-width="2.5" fill="none"/></svg>
<svg class="b" style="left:736px;top:895px;" width="13" height="22" viewBox="0 0 13 22"><path d="M11.5 1.5 L2 11 L11.5 20.5" stroke="#8a8a8a" stroke-width="2.2" fill="none"/></svg>
<svg class="b" style="left:786px;top:895px;" width="13" height="22" viewBox="0 0 13 22"><path d="M1.5 1.5 L11 11 L1.5 20.5" stroke="#111" stroke-width="2.4" fill="none"/></svg>
<div class="b" style="left:963px;top:131px;width:953px;height:808px;background:#fff;"></div>
<div class="t" style="left:990.63px;top:172px;font-size:29.3px;letter-spacing:-0.229px;font-weight:bold;">Configure pivot table</div>
<svg class="b" style="left:1850px;top:176px;" width="22" height="21" viewBox="0 0 22 21"><path d="M0.8 0.8 L21.2 20.2 M21.2 0.8 L0.8 20.2" stroke="#111" stroke-width="1.7" fill="none"/></svg>
<div class="t" style="left:990.84px;top:247px;font-size:24px;letter-spacing:-0.457px;font-weight:bold;">Pivot source</div>
<div class="b" style="left:991px;top:285px;width:898px;height:70px;background:#fafafa;border:1px solid #e2e2e2;border-radius:6px;"></div>
<div class="b" style="left:1060px;top:286px;width:1px;height:68px;background:#e2e2e2;"></div>
<svg class="b" style="left:1013px;top:307px;" width="26" height="26" viewBox="0 0 26 26"><circle cx="13" cy="13" r="8.4" fill="none" stroke="#111" stroke-width="1.8"/><path d="M13 0.3 V8 M13 18 V25.7 M0.3 13 H8 M18 13 H25.7" stroke="#111" stroke-width="2.1"/></svg>
<div class="t" style="left:1081.88px;top:310px;font-size:22.5px;letter-spacing:0.667px;color:#111;">'Sales Data'!A1:G24026</div>
<div class="b" style="left:963.7px;top:383px;width:953px;height:1px;background:#e8e8e8;"></div>
<div class="b" style="left:1635.5px;top:383px;width:1px;height:556px;background:#e8e8e8;"></div>
<div class="b" style="left:963.7px;top:547px;width:672px;height:1px;background:#e8e8e8;"></div>
<div class="b" style="left:963.7px;top:731px;width:672px;height:1px;background:#e8e8e8;"></div>
<div class="b" style="left:963.7px;top:914px;width:672px;height:1px;background:#e8e8e8;"></div>
<div class="b" style="left:1620px;top:403.5px;width:12px;height:416.5px;background:#bfbfbf;border-radius:6px;"></div>
<div class="t" style="left:990.15px;top:399px;font-size:23.9px;letter-spacing:-0.502px;font-weight:bold;">Rows</div>
<svg class="b" style="left:1573.5px;top:403.0px;" width="17" height="17" viewBox="0 0 17 17"><path d="M8.5 0 V17 M0 8.5 H17" stroke="#111" stroke-width="2.2" fill="none"/></svg>
<svg class="b" style="left:992px;top:471.7px;" width="12" height="18.6" viewBox="0 0 12 18.6"><circle cx="2.4" cy="2.4000000000000004" r="2.3" fill="#757575"/><circle cx="2.4" cy="9.3" r="2.3" fill="#757575"/><circle cx="2.4" cy="16.200000000000003" r="2.3" fill="#757575"/><circle cx="9.6" cy="2.4000000000000004" r="2.3" fill="#757575"/><circle cx="9.6" cy="9.3" r="2.3" fill="#757575"/><circle cx="9.6" cy="16.200000000000003" r="2.3" fill="#757575"/></svg>
<div class="b" style="left:1019px;top:452px;width:589px;height:59px;background:#fafafa;border:1px solid #e2e2e2;border-radius:6px;"></div>
<div class="b" style="left:1549px;top:453px;width:58px;height:57px;background:#fff;border-left:1px solid #e2e2e2;border-radius:0 5px 5px 0;"></div>
<div class="t" style="left:1034.76px;top:471px;font-size:22.3px;letter-spacing:-0.085px;transform:scaleX(0.94);transform-origin:0 0;color:#111;">STATE</div>
<svg class="b" style="left:1570px;top:473.4px;" width="16" height="16" viewBox="0 0 16 16"><path d="M1 1 L15 15 M15 1 L1 15" stroke="#111" stroke-width="2.3" fill="none"/></svg>
<div class="t" style="left:990.74px;top:583px;font-size:23.9px;letter-spacing:-0.400px;font-weight:bold;">Columns</div>
<svg class="b" style="left:1573.5px;top:587.0px;" width="17" height="17" viewBox="0 0 17 17"><path d="M8.5 0 V17 M0 8.5 H17" stroke="#111" stroke-width="2.2" fill="none"/></svg>
<svg class="b" style="left:992px;top:655.7px;" width="12" height="18.6" viewBox="0 0 12 18.6"><circle cx="2.4" cy="2.4000000000000004" r="2.3" fill="#757575"/><circle cx="2.4" cy="9.3" r="2.3" fill="#757575"/><circle cx="2.4" cy="16.200000000000003" r="2.3" fill="#757575"/><circle cx="9.6" cy="2.4000000000000004" r="2.3" fill="#757575"/><circle cx="9.6" cy="9.3" r="2.3" fill="#757575"/><circle cx="9.6" cy="16.200000000000003" r="2.3" fill="#757575"/></svg>
<div class="b" style="left:1019px;top:636px;width:589px;height:59px;background:#fafafa;border:1px solid #e2e2e2;border-radius:6px;"></div>
<div class="b" style="left:1549px;top:637px;width:58px;height:57px;background:#fff;border-left:1px solid #e2e2e2;border-radius:0 5px 5px 0;"></div>
<div class="b" style="left:1354px;top:636px;width:196px;height:59px;background:#fafafa;border:1px solid #e2e2e2;border-radius:6px;"></div>
<div class="t" style="left:1034.67px;top:654px;font-size:22.3px;letter-spacing:-0.406px;transform:scaleX(0.92);transform-origin:0 0;color:#111;">CREATED_AT</div>
<svg class="b" style="left:1330.3px;top:661.0px;" width="14" height="9" viewBox="0 0 14 9"><path d="M1 1.2 L7 7.4 L13 1.2" stroke="#686868" stroke-width="2.1" fill="none"/></svg>
<div class="t" style="left:1368.22px;top:654px;font-size:22.3px;letter-spacing:0.820px;color:#111;">Month</div>
<svg class="b" style="left:1524.8px;top:661.0px;" width="14" height="9" viewBox="0 0 14 9"><path d="M1 1.2 L7 7.4 L13 1.2" stroke="#686868" stroke-width="2.1" fill="none"/></svg>
<svg class="b" style="left:1570px;top:656.6px;" width="16" height="16" viewBox="0 0 16 16"><path d="M1 1 L15 15 M15 1 L1 15" stroke="#111" stroke-width="2.3" fill="none"/></svg>
<div class="t" style="left:991.58px;top:767px;font-size:23.9px;letter-spacing:-0.067px;font-weight:bold;">Values</div>
<svg class="b" style="left:1573.5px;top:770.5px;" width="17" height="17" viewBox="0 0 17 17"><path d="M8.5 0 V17 M0 8.5 H17" stroke="#111" stroke-width="2.2" fill="none"/></svg>
<svg class="b" style="left:992px;top:839.7px;" width="12" height="18.6" viewBox="0 0 12 18.6"><circle cx="2.4" cy="2.4000000000000004" r="2.3" fill="#757575"/><circle cx="2.4" cy="9.3" r="2.3" fill="#757575"/><circle cx="2.4" cy="16.200000000000003" r="2.3" fill="#757575"/><circle cx="9.6" cy="2.4000000000000004" r="2.3" fill="#757575"/><circle cx="9.6" cy="9.3" r="2.3" fill="#757575"/><circle cx="9.6" cy="16.200000000000003" r="2.3" fill="#757575"/></svg>
<div class="b" style="left:1019px;top:820px;width:589px;height:59px;background:#fafafa;border:1px solid #e2e2e2;border-radius:6px;"></div>
<div class="b" style="left:1549px;top:821px;width:58px;height:57px;background:#fff;border-left:1px solid #e2e2e2;border-radius:0 5px 5px 0;"></div>
<div class="b" style="left:1389px;top:821px;width:1px;height:57px;background:#e2e2e2;"></div>
<div class="t" style="left:1035.70px;top:838px;font-size:22.3px;letter-spacing:0.205px;transform:scaleX(0.96);transform-origin:0 0;color:#111;">AMOUNT</div>
<svg class="b" style="left:1365px;top:845.0px;" width="14" height="9" viewBox="0 0 14 9"><path d="M1 1.2 L7 7.4 L13 1.2" stroke="#686868" stroke-width="2.1" fill="none"/></svg>
<div class="t" style="left:1411.00px;top:838px;font-size:22.3px;letter-spacing:-0.222px;color:#111;">Sum</div>
<svg class="b" style="left:1515.5px;top:845.0px;" width="14" height="9" viewBox="0 0 14 9"><path d="M1 1.2 L7 7.4 L13 1.2" stroke="#686868" stroke-width="2.1" fill="none"/></svg>
<svg class="b" style="left:1570px;top:840.6px;" width="16" height="16" viewBox="0 0 16 16"><path d="M1 1 L15 15 M15 1 L1 15" stroke="#111" stroke-width="2.3" fill="none"/></svg>
<div class="b" style="left:1658px;top:405px;width:238px;height:60px;background:#fff;border:1px solid #e2e2e2;border-radius:6px;"></div>
<div class="t" style="left:1673.12px;top:424px;font-size:21.7px;letter-spacing:0.344px;color:#a9a9a9;">Search fields...</div>
<svg class="b" style="left:1662.9px;top:486.99999999999994px;" width="12" height="18.6" viewBox="0 0 12 18.6"><circle cx="2.4" cy="2.4000000000000004" r="2.3" fill="#757575"/><circle cx="2.4" cy="9.3" r="2.3" fill="#757575"/><circle cx="2.4" cy="16.200000000000003" r="2.3" fill="#757575"/><circle cx="9.6" cy="2.4000000000000004" r="2.3" fill="#757575"/><circle cx="9.6" cy="9.3" r="2.3" fill="#757575"/><circle cx="9.6" cy="16.200000000000003" r="2.3" fill="#757575"/></svg>
<div class="t" style="left:1689.40px;top:485px;font-size:21.2px;letter-spacing:0.007px;transform:scaleX(0.94);transform-origin:0 0;color:#222;">ORDERID</div>
<svg class="b" style="left:1662.9px;top:539.5px;" width="12" height="18.6" viewBox="0 0 12 18.6"><circle cx="2.4" cy="2.4000000000000004" r="2.3" fill="#757575"/><circle cx="2.4" cy="9.3" r="2.3" fill="#757575"/><circle cx="2.4" cy="16.200000000000003" r="2.3" fill="#757575"/><circle cx="9.6" cy="2.4000000000000004" r="2.3" fill="#757575"/><circle cx="9.6" cy="9.3" r="2.3" fill="#757575"/><circle cx="9.6" cy="16.200000000000003" r="2.3" fill="#757575"/></svg>
<div class="t" style="left:1689.30px;top:537px;font-size:21.2px;letter-spacing:0.141px;transform:scaleX(0.94);transform-origin:0 0;color:#222;">CREATED_AT</div>
<svg class="b" style="left:1662.9px;top:592.0px;" width="12" height="18.6" viewBox="0 0 12 18.6"><circle cx="2.4" cy="2.4000000000000004" r="2.3" fill="#757575"/><circle cx="2.4" cy="9.3" r="2.3" fill="#757575"/><circle cx="2.4" cy="16.200000000000003" r="2.3" fill="#757575"/><circle cx="9.6" cy="2.4000000000000004" r="2.3" fill="#757575"/><circle cx="9.6" cy="9.3" r="2.3" fill="#757575"/><circle cx="9.6" cy="16.200000000000003" r="2.3" fill="#757575"/></svg>
<div class="t" style="left:1690.30px;top:590px;font-size:21.2px;letter-spacing:1.312px;transform:scaleX(0.94);transform-origin:0 0;color:#222;">AMOUNT</div>
<svg class="b" style="left:1662.9px;top:644.5px;" width="12" height="18.6" viewBox="0 0 12 18.6"><circle cx="2.4" cy="2.4000000000000004" r="2.3" fill="#757575"/><circle cx="2.4" cy="9.3" r="2.3" fill="#757575"/><circle cx="2.4" cy="16.200000000000003" r="2.3" fill="#757575"/><circle cx="9.6" cy="2.4000000000000004" r="2.3" fill="#757575"/><circle cx="9.6" cy="9.3" r="2.3" fill="#757575"/><circle cx="9.6" cy="16.200000000000003" r="2.3" fill="#757575"/></svg>
<div class="t" style="left:1688.60px;top:642px;font-size:21.2px;letter-spacing:0.525px;color:#222;">First Name</div>
<svg class="b" style="left:1662.9px;top:697.0px;" width="12" height="18.6" viewBox="0 0 12 18.6"><circle cx="2.4" cy="2.4000000000000004" r="2.3" fill="#757575"/><circle cx="2.4" cy="9.3" r="2.3" fill="#757575"/><circle cx="2.4" cy="16.200000000000003" r="2.3" fill="#757575"/><circle cx="9.6" cy="2.4000000000000004" r="2.3" fill="#757575"/><circle cx="9.6" cy="9.3" r="2.3" fill="#757575"/><circle cx="9.6" cy="16.200000000000003" r="2.3" fill="#757575"/></svg>
<div class="t" style="left:1688.60px;top:695px;font-size:21.2px;letter-spacing:0.558px;color:#222;">Last Name</div>
<svg class="b" style="left:1662.9px;top:749.5px;" width="12" height="18.6" viewBox="0 0 12 18.6"><circle cx="2.4" cy="2.4000000000000004" r="2.3" fill="#757575"/><circle cx="2.4" cy="9.3" r="2.3" fill="#757575"/><circle cx="2.4" cy="16.200000000000003" r="2.3" fill="#757575"/><circle cx="9.6" cy="2.4000000000000004" r="2.3" fill="#757575"/><circle cx="9.6" cy="9.3" r="2.3" fill="#757575"/><circle cx="9.6" cy="16.200000000000003" r="2.3" fill="#757575"/></svg>
<div class="t" style="left:1689.90px;top:747px;font-size:21.2px;letter-spacing:1.852px;transform:scaleX(0.94);transform-origin:0 0;color:#222;">TOWN</div>
<svg class="b" style="left:1662.9px;top:802.0px;" width="12" height="18.6" viewBox="0 0 12 18.6"><circle cx="2.4" cy="2.4000000000000004" r="2.3" fill="#757575"/><circle cx="2.4" cy="9.3" r="2.3" fill="#757575"/><circle cx="2.4" cy="16.200000000000003" r="2.3" fill="#757575"/><circle cx="9.6" cy="2.4000000000000004" r="2.3" fill="#757575"/><circle cx="9.6" cy="9.3" r="2.3" fill="#757575"/><circle cx="9.6" cy="16.200000000000003" r="2.3" fill="#757575"/></svg>
<div class="t" style="left:1689.40px;top:800px;font-size:21.2px;letter-spacing:0.789px;transform:scaleX(0.94);transform-origin:0 0;color:#222;">STATE</div>
<div class="b" style="left:0;top:0;width:0;height:0;z-index:5">
<div class="b" style="left:1320px;top:67px;width:34px;height:569px;background:linear-gradient(to left,rgba(0,0,0,.08),rgba(0,0,0,.042) 25%,rgba(0,0,0,.018) 55%,rgba(0,0,0,.005) 80%,rgba(0,0,0,0));"></div>
<div class="b" style="left:1550px;top:67px;width:34px;height:569px;background:linear-gradient(to right,rgba(0,0,0,.08),rgba(0,0,0,.042) 25%,rgba(0,0,0,.018) 55%,rgba(0,0,0,.005) 80%,rgba(0,0,0,0));"></div>
<div class="b" style="left:1354px;top:66px;width:196px;height:571px;background:#fff;border:1px solid #e0e0e0;border-radius:0 0 5px 5px;box-shadow:0 5px 9px -1px rgba(0,0,0,.13);"></div>
<div class="b" style="left:1362px;top:185px;width:180px;height:53px;background:#ededed;border-radius:3px;"></div>
<div class="t" style="left:1374.86px;top:87px;font-size:21.8px;letter-spacing:-0.170px;color:#111;">Year</div>
<div class="t" style="left:1374.42px;top:143px;font-size:21.8px;letter-spacing:0.178px;color:#111;">Quarter</div>
<div class="t" style="left:1373.66px;top:199px;font-size:21.8px;letter-spacing:0.974px;color:#111;">Month</div>
<div class="t" style="left:1375.29px;top:255px;font-size:21.8px;letter-spacing:-0.046px;color:#111;">Week (Sun)</div>
<div class="t" style="left:1375.29px;top:311px;font-size:21.8px;letter-spacing:0.141px;color:#111;">Week (Mon)</div>
<div class="t" style="left:1373.66px;top:367px;font-size:21.8px;letter-spacing:-0.212px;color:#111;">Day</div>
<div class="t" style="left:1373.66px;top:423px;font-size:21.8px;letter-spacing:0.495px;color:#111;">Hour</div>
<div class="t" style="left:1373.66px;top:479px;font-size:21.8px;letter-spacing:0.683px;color:#111;">Minute</div>
<div class="t" style="left:1374.42px;top:535px;font-size:21.8px;letter-spacing:0.417px;color:#111;">Second</div>
<div class="t" style="left:1373.66px;top:591px;font-size:21.8px;letter-spacing:0.287px;color:#111;">Exact time</div>
</div>
<svg class="b" style="left:0;top:0;" width="1916" height="939" viewBox="0 0 1916 939"><path d="M29 98.6 A10.6 10.6 0 1 1 39.6 108.6" fill="none" stroke="#222" stroke-width="2" stroke-linecap="round" stroke-linejoin="round" /><path d="M26 96.2 L29.3 100.4 L33 96.2" fill="none" stroke="#222" stroke-width="2.4" stroke-linecap="round" stroke-linejoin="round" /><path d="M102.7 98.6 A10.6 10.6 0 1 0 92.1 108.6" fill="none" stroke="#222" stroke-width="2" stroke-linecap="round" stroke-linejoin="round" /><path d="M98.7 96.2 L102.4 100.4 L105.9 96.2" fill="none" stroke="#222" stroke-width="2.4" stroke-linecap="round" stroke-linejoin="round" /><path d="M163.8 87.3 H172.5 C180 87.3 180 97.5 172.5 97.5 H168.2 M172.5 97.5 C182.5 97.5 182.5 108.3 172.8 108.3 H163.8 M168.2 87.3 V108.3" fill="none" stroke="#222" stroke-width="2.9" stroke-linecap="round" stroke-linejoin="round" /><path d="M226 87.5 H235.3 M212.6 108.7 H221.8 M230.7 87.5 L217.3 108.7" fill="none" stroke="#222" stroke-width="2.2" stroke-linecap="round" stroke-linejoin="round" /><path d="M267 87.7 H273.4 M280 87.7 H286.8 M270.2 87.7 V98.5 A6.8 6.8 0 0 0 283.6 98.5 V87.7 M266.2 108.6 H287.6" fill="none" stroke="#222" stroke-width="2" stroke-linecap="round" stroke-linejoin="round" /><path d="M499 103.4 H503.6 M512.2 103.4 H516.8 M501.4 103.2 L507.4 87.4 H508.6 L514.6 103.2 M503.6 97.8 H512.4" fill="none" stroke="#222" stroke-width="1.9" stroke-linecap="round" stroke-linejoin="round" /><path d="M498 109.3 H517.8" fill="none" stroke="#000" stroke-width="3.2" stroke-linecap="round" stroke-linejoin="round" /><path d="M541.5 96.6 L547.1 102.2 L552.7 96.6" fill="none" stroke="#222" stroke-width="2.2" stroke-linecap="round" stroke-linejoin="round" /><path d="M621.6 96.6 L627.2 102.2 L632.8000000000001 96.6" fill="none" stroke="#222" stroke-width="2.2" stroke-linecap="round" stroke-linejoin="round" /><path d="M702.4 96.6 L708 102.2 L713.6 96.6" fill="none" stroke="#222" stroke-width="2.2" stroke-linecap="round" stroke-linejoin="round" /><path d="M586.3 86.6 L597 97 L588 104 L580 97 L589 88.6 M580.6 97 H596.8" fill="none" stroke="#222" stroke-width="1.8" stroke-linecap="round" stroke-linejoin="round" /><path d="M596.6 99.2 C598.2 101.2 598.6 102 598.6 102.8 A2 2 0 0 1 594.6 102.8 C594.6 102 595 101.2 596.6 99.2 Z" fill="#222"/><path d="M579.8 109.3 H598.4" fill="none" stroke="#a8a8a8" stroke-width="2.8" stroke-linecap="round" stroke-linejoin="round" /><path d="M657.6 86.3 H680.6 V109.4 H657.6 Z M669.1 86.3 V109.4 M657.6 97.8 H680.6" fill="none" stroke="#222" stroke-width="2.3" stroke-linecap="round" stroke-linejoin="round" /><path d="M831.6 87.6 L810.6 108.8" fill="none" stroke="#222" stroke-width="2.3" stroke-linecap="round" stroke-linejoin="round" /><circle cx="814.8" cy="91.7" r="3.3" fill="none" stroke="#222" stroke-width="2.1"/><circle cx="828" cy="105.2" r="3.3" fill="none" stroke="#222" stroke-width="2.1"/><circle cx="873.5" cy="89.9" r="4.5" fill="#222"/><path d="M876.9 90.5 C877.6 98 874 104 869 108.4" fill="none" stroke="#222" stroke-width="2.2" stroke-linecap="round" stroke-linejoin="round" /><path d="M932.4 106.5 H921 M924.6 102.9 L921 106.5 L924.6 110.1" fill="none" stroke="#222" stroke-width="1.8" stroke-linecap="round" stroke-linejoin="round" /><path d="M974.2 106.5 H986.6 M983 102.9 L986.6 106.5 L983 110.1" fill="none" stroke="#222" stroke-width="1.8" stroke-linecap="round" stroke-linejoin="round" /><path d="M1196.6 95.3 L1203.7 102.5 L1210.8 95.3" fill="none" stroke="#222" stroke-width="2.3" stroke-linecap="round" stroke-linejoin="round" /><g transform="translate(-0.8,0)"><path d="M1280.6 88.6 H1271.4 Q1268.4 88.6 1268.4 91.6 V95 M1268.4 103.6 V107 Q1268.4 110 1271.4 110 H1280.6 M1287.4 88.6 H1296.2 Q1299.2 88.6 1299.2 91.6 V95 M1299.2 103.6 V107 Q1299.2 110 1296.2 110 H1287.4" fill="none" stroke="#222" stroke-width="2.1" stroke-linecap="round" stroke-linejoin="round" /><path d="M1268 99.3 H1277 M1273.8 96 L1277.1 99.3 L1273.8 102.6 M1299.6 99.3 H1290 M1293.4 96 L1290 99.3 L1293.4 102.6" fill="none" stroke="#222" stroke-width="2.1" stroke-linecap="round" stroke-linejoin="round" /></g><circle cx="1348.3" cy="97.9" r="1.7" fill="#222"/><circle cx="1353.8" cy="97.9" r="1.7" fill="#222"/><ellipse cx="1655" cy="90.8" rx="11.2" ry="4.3" fill="none" stroke="#7a7a7a" stroke-width="1.5"/><path d="M1643.8 90.8 V106.6 C1643.8 112.4 1666.2 112.4 1666.2 106.6 V90.8 M1643.8 96.1 C1643.8 101.9 1666.2 101.9 1666.2 96.1 M1643.8 101.4 C1643.8 107.2 1666.2 107.2 1666.2 101.4" fill="none" stroke="#7a7a7a" stroke-width="1.5" stroke-linecap="round" stroke-linejoin="round" /><path d="M1793 93.3 L1786.8 99.2 L1793 105.1 M1807.2 93.3 L1813.4 99.2 L1807.2 105.1 M1805.4 90.8 L1796.6 107.4" fill="none" stroke="#666" stroke-width="1.9" stroke-linecap="round" stroke-linejoin="round" /><g transform="translate(1124.7,15.9) scale(1.375)"><path d="M19.35 10.04C18.67 6.59 15.64 4 12 4 9.11 4 6.6 5.64 5.35 8.04 2.34 8.36 0 10.91 0 14c0 3.31 2.69 6 6 6h13c2.76 0 5-2.24 5-5 0-2.64-2.05-4.78-4.65-4.96z" fill="none" stroke="#7e7e7e" stroke-width="2.0" stroke-linecap="round" stroke-linejoin="round" /><path d="M8 13.6 L10.4 16 L15 11" fill="none" stroke="#7e7e7e" stroke-width="2.0" stroke-linecap="round" stroke-linejoin="round" /></g><circle cx="1650" cy="32.3" r="7.2" fill="none" stroke="#dcdcdc" stroke-width="1.4"/><rect x="1645.6" y="36.6" width="8.8" height="5" fill="#2d2d2d"/><path d="M1645.8 38 C1647 39.4 1647 40 1647 40.6 H1653 C1653 40 1653 39.4 1654.2 38 M1647 42.8 H1653 M1648 45 H1652 M1650 19.2 V24.4 M1636.8 32.3 H1640.8 M1659.2 32.3 H1663.2 M1640.4 22.8 L1643.4 25.8 M1659.6 22.8 L1656.6 25.8" fill="none" stroke="#dcdcdc" stroke-width="1.4" stroke-linecap="round" stroke-linejoin="round" /><circle cx="1724" cy="26.3" r="5.6" fill="none" stroke="#fff" stroke-width="1.8"/><path d="M1715 44.2 V42.6 A5 5 0 0 1 1720 37.6 H1729.4 M1732.4 21 A5.6 5.6 0 0 1 1732.4 31.4 M1736.1 36.2 V45.2 M1731.6 40.7 H1740.6" fill="none" stroke="#fff" stroke-width="1.8" stroke-linecap="round" stroke-linejoin="round" /><circle cx="1878.7" cy="29" r="6" fill="none" stroke="#eee" stroke-width="1.5"/><path d="M1869.6 41.6 C1869.6 33.6 1887.8 33.6 1887.8 41.6 Z" fill="none" stroke="#eee" stroke-width="1.5" stroke-linecap="round" stroke-linejoin="round" /></svg>
<div class="t" style="left:761.74px;top:82px;font-size:30px;transform:scaleX(0.86);transform-origin:0 0;color:#222;">$</div>
<div class="t" style="left:918.79px;top:83px;font-size:19px;letter-spacing:0.552px;color:#222;transform:scaleX(.8);transform-origin:0 0;">.0</div>
<div class="t" style="left:966.99px;top:83px;font-size:19px;letter-spacing:1.430px;color:#222;transform:scaleX(.8);transform-origin:0 0;">.00</div>
<svg class="b" style="left:927.5px;top:154.5px;" width="16" height="10" viewBox="0 0 16 10"><path d="M1.2 1.4 L8 8.2 L14.8 1.4" fill="none" stroke="#111" stroke-width="2" stroke-linecap="round" stroke-linejoin="round" /></svg>
</body></html>
